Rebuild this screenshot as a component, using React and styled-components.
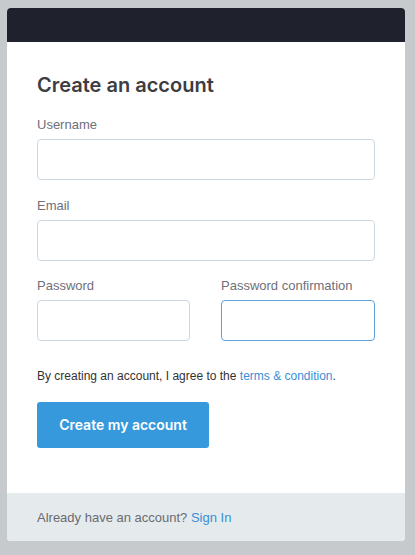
import React from "react";
import styled, { createGlobalStyle } from "styled-components";

const GlobalStyle = createGlobalStyle`
    html, body {
        margin: 0;
        padding: 0;
        background-color: #c6cacd;
    }
    body {
        font-family: "Liberation Sans", Arial, sans-serif;
    }
`

const App = () => {
    return (
        <>
            <GlobalStyle />
            <Page>
                <Card>
                    <CardHeader />
                    <CardBody>
                        <Title>Create an account</Title>
                        <Field>
                            <Label>Username</Label>
                            <Input type="text" />
                        </Field>
                        <Field>
                            <Label>Email</Label>
                            <Input type="email" />
                        </Field>
                        <Row>
                            <Field>
                                <Label>Password</Label>
                                <Input type="password" />
                            </Field>
                            <Field>
                                <Label>Password confirmation</Label>
                                <Input type="password" focused />
                            </Field>
                        </Row>
                        <Terms>
                            By creating an account, I agree to the <Link href="#">terms &amp; condition</Link>.
                        </Terms>
                        <Button type="button">Create my account</Button>
                    </CardBody>
                    <CardFooter>
                        Already have an account? <Link href="#">Sign In</Link>
                    </CardFooter>
                </Card>
            </Page>
        </>
    )
}

const Page = styled.div`
    padding: 8px 10px 14px 7px;
    width: 415px;
    box-sizing: border-box;
`

const Card = styled.div`
    width: 398px;
    background-color: #fff;
    border-radius: 4px;
    overflow: hidden;
`

const CardHeader = styled.div`
    height: 34px;
    background-color: #1f212d;
`

const CardBody = styled.div`
    padding: 28px 30px 45px 30px;
`

const Title = styled.h1`
    margin: 0 0 15px 0;
    font-family: Inter, "Open Sans", sans-serif;
    font-weight: 600;
    font-size: 20px;
    line-height: 30px;
    color: #3d3d42;
`

const Field = styled.div`
    display: flex;
    flex-direction: column;
    margin-bottom: 16px;
`

const Label = styled.label`
    font-size: 13px;
    line-height: 20px;
    color: #6f6f7a;
    margin-bottom: 4px;
`

const Input = styled.input`
    box-sizing: border-box;
    height: 41px;
    width: 100%;
    border: 1px solid ${props => props.focused ? '#5aa2e0' : '#cdd7e1'};
    border-radius: 4px;
    background-color: #fff;
    outline: none;
    padding: 0 10px;
    font-size: 13px;
`

const Row = styled.div`
    display: grid;
    grid-template-columns: 153px 154px;
    column-gap: 31px;
    margin-top: -1px;
`

const Terms = styled.p`
    margin: 11px 0 18px 0;
    font-size: 12px;
    line-height: 16px;
    color: #333;
`

const Link = styled.a`
    color: #3a8fd6;
    text-decoration: none;
`

const Button = styled.button`
    display: block;
    width: 172px;
    height: 46px;
    padding: 0 0 2px 0;
    border: none;
    border-radius: 3px;
    background-color: #3699dc;
    color: #fff;
    font-family: Inter, "Open Sans", sans-serif;
    font-weight: 600;
    font-size: 14px;
    cursor: pointer;
`

const CardFooter = styled.div`
    background-color: #e5eaed;
    height: 48px;
    display: flex;
    align-items: center;
    padding: 0 30px;
    font-size: 13px;
    color: #6a6a72;
    white-space: pre;
`

export default App;
